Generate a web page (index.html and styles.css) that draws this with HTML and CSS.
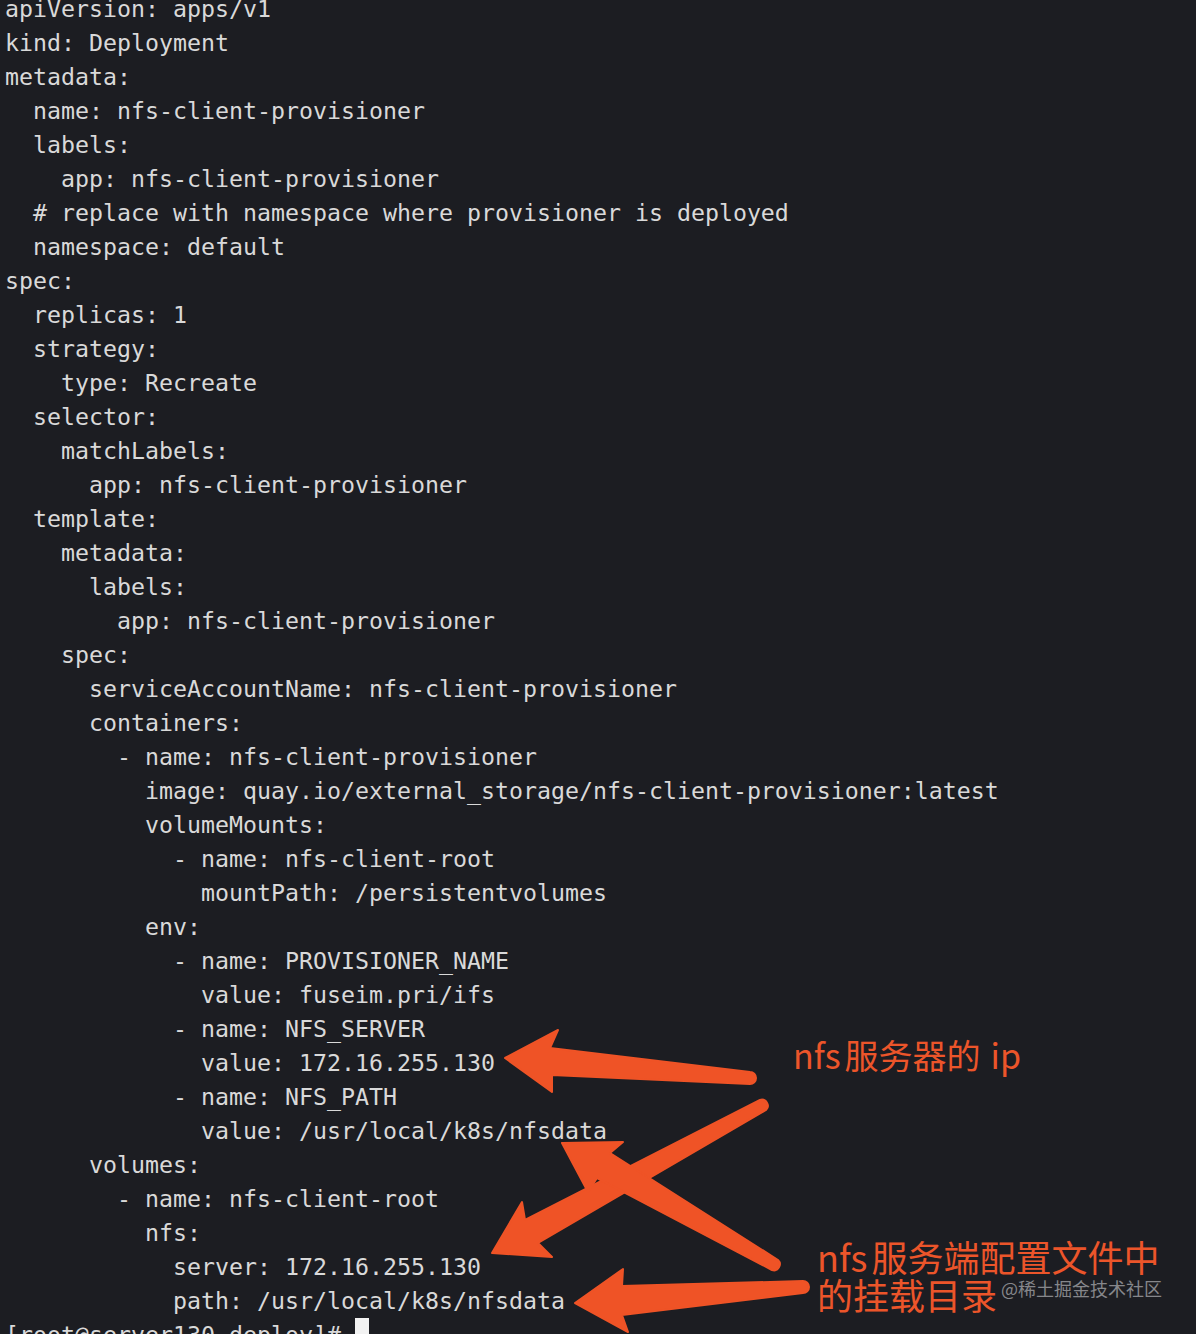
FILE: index.html
```html
<!DOCTYPE html>
<html lang="zh">
<head>
<meta charset="utf-8">
<title>nfs-client-provisioner deployment</title>
<link rel="stylesheet" href="styles.css">
</head>
<body>
<div class="terminal">
<pre class="code">apiVersion: apps/v1
kind: Deployment
metadata:
  name: nfs-client-provisioner
  labels:
    app: nfs-client-provisioner
  # replace with namespace where provisioner is deployed
  namespace: default
spec:
  replicas: 1
  strategy:
    type: Recreate
  selector:
    matchLabels:
      app: nfs-client-provisioner
  template:
    metadata:
      labels:
        app: nfs-client-provisioner
    spec:
      serviceAccountName: nfs-client-provisioner
      containers:
        - name: nfs-client-provisioner
          image: quay.io/external_storage/nfs-client-provisioner:latest
          volumeMounts:
            - name: nfs-client-root
              mountPath: /persistentvolumes
          env:
            - name: PROVISIONER_NAME
              value: fuseim.pri/ifs
            - name: NFS_SERVER
              value: 172.16.255.130
            - name: NFS_PATH
              value: /usr/local/k8s/nfsdata
      volumes:
        - name: nfs-client-root
          nfs:
            server: 172.16.255.130
            path: /usr/local/k8s/nfsdata
[root@server130 deploy]# <span class="cursor"> </span></pre>

<svg class="arrows" width="1196" height="1334" viewBox="0 0 1196 1334" aria-hidden="true">
  <g fill="#ef5326" stroke="#ef5326" stroke-width="2" stroke-linejoin="round">
    <path d="M505 1058 L558 1030 L550 1048 L750 1072 A6 6 0 0 1 750 1084 L552 1075 L552 1092 Z"/>
    <path d="M492 1253 L522 1202 L525 1220 L760 1100 A6 6 0 0 1 766 1110 L538 1243 L552 1257 Z"/>
    <path d="M562 1143 L623 1142 L610 1153 L778 1260 A6 6 0 0 1 772 1270 L597 1178 L588 1192 Z"/>
    <path d="M575 1303 L623 1269 L622 1286 L803 1281 A6 6 0 0 1 803 1293 L622 1315 L628 1332 Z"/>
  </g>
</svg>

<div class="note note-ip">nfs<span class="gap-s"></span>服务器的<span class="gap-l"></span>ip</div>
<div class="note note-path">nfs<span class="gap-s"></span>服务端配置文件中<br>的挂载目录</div>
<div class="watermark">@稀土掘金技术社区</div>
</div>
</body>
</html>
```

FILE: styles.css
```css
html, body {
  margin: 0;
  padding: 0;
  background: #1c1d22;
}

.terminal {
  position: relative;
  width: 1196px;
  height: 1334px;
  overflow: hidden;
  background: #1c1d22;
}

.code {
  margin: -8px 0 0 0;
  padding: 0 0 0 5px;
  font-family: "DejaVu Sans Mono", "Liberation Mono", monospace;
  font-size: 23.25px;
  line-height: 34px;
  color: #d9d9d9;
  white-space: pre;
}

.cursor {
  display: inline-block;
  width: 14px;
  height: 34px;
  background: #f2f2f2;
  vertical-align: top;
}

.arrows {
  position: absolute;
  left: 0;
  top: 0;
  pointer-events: none;
}

.note {
  position: absolute;
  color: #ec552a;
  font-family: "Noto Sans CJK SC", "Noto Sans", sans-serif;
  white-space: nowrap;
}

.gap-s {
  display: inline-block;
  width: 4px;
}

.gap-l {
  display: inline-block;
  width: 10px;
}

.note-ip {
  left: 793px;
  top: 1038px;
  font-size: 34px;
  line-height: 1;
}

.note-path {
  left: 817px;
  top: 1237px;
  font-size: 36px;
  line-height: 38px;
}

.watermark {
  position: absolute;
  left: 1001px;
  top: 1277px;
  font-family: "Noto Sans CJK SC", "Noto Sans", sans-serif;
  font-size: 18px;
  line-height: 22px;
  color: #86878b;
  white-space: nowrap;
}
```
